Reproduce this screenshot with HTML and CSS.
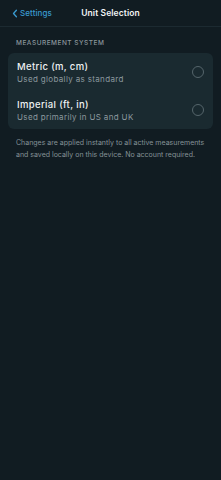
FILE: index.html
```html
<!DOCTYPE html>
<html>
<head>
<meta charset="utf-8">
<link rel="stylesheet" href="styles.css">
</head>
<body>
<div class="screen">
  <header class="nav">
    <div class="back">
      <svg class="chev" width="6" height="9" viewBox="0 0 6 9"><path d="M4.4 1.2 L1.5 4.5 L4.4 7.8" fill="none" stroke="#3a9bd0" stroke-width="1.3" stroke-linecap="round" stroke-linejoin="round"/></svg>
      <span>Settings</span>
    </div>
    <div class="title">Unit Selection</div>
  </header>
  <main class="content">
    <div class="section-label">MEASUREMENT SYSTEM</div>
    <div class="card">
      <div class="row">
        <div class="text">
          <div class="row-title">Metric (m, cm)</div>
          <div class="row-sub">Used globally as standard</div>
        </div>
        <div class="radio"></div>
      </div>
      <div class="row">
        <div class="text">
          <div class="row-title">Imperial (ft, in)</div>
          <div class="row-sub">Used primarily in US and UK</div>
        </div>
        <div class="radio"></div>
      </div>
    </div>
    <p class="note">Changes are applied instantly to all active measurements and saved locally on this device. No account required.</p>
  </main>
</div>
</body>
</html>
```
FILE: styles.css
```css
html, body {
  margin: 0;
  padding: 0;
  background: #111c22;
}
body {
  font-family: Inter, "Noto Sans", sans-serif;
  color: #e6eaec;
}
.screen {
  width: 221px;
  height: 480px;
  background: #111c22;
}
.nav {
  height: 26px;
  border-bottom: 1px solid #1c2a31;
  position: relative;
  display: flex;
  align-items: center;
  justify-content: center;
}
.back {
  position: absolute;
  left: 12px;
  top: 0;
  height: 26px;
  display: flex;
  align-items: center;
  gap: 2px;
  color: #3a9bd0;
  font-size: 8px;
  font-weight: 500;
  letter-spacing: 0.1px;
}
.title {
  font-size: 8.5px;
  font-weight: 600;
  letter-spacing: 0.1px;
  color: #f2f4f5;
}
.content {
  padding: 12px 8px 0;
}
.section-label {
  font-size: 6.5px;
  font-weight: 500;
  letter-spacing: 0.5px;
  color: #8a969c;
  padding: 0 8px;
  margin-bottom: 6px;
}
.card {
  background: #1a2a30;
  border-radius: 6px;
}
.row {
  display: flex;
  align-items: center;
  height: 38px;
  padding: 0 9px 0 9px;
}
.text {
  flex: 1;
}
.row-title {
  font-size: 9.5px;
  font-weight: 500;
  letter-spacing: 0.35px;
  color: #eef1f2;
  line-height: 11px;
}
.row-sub {
  font-size: 8px;
  letter-spacing: 0.35px;
  color: #8c999f;
  line-height: 10px;
  margin-top: 2px;
}
.radio {
  width: 10px;
  height: 10px;
  border: 1px solid #55656b;
  border-radius: 50%;
}
.note {
  margin: 8px 2px 0 8px;
  font-size: 7px;
  line-height: 12px;
  color: #859297;
}
```
